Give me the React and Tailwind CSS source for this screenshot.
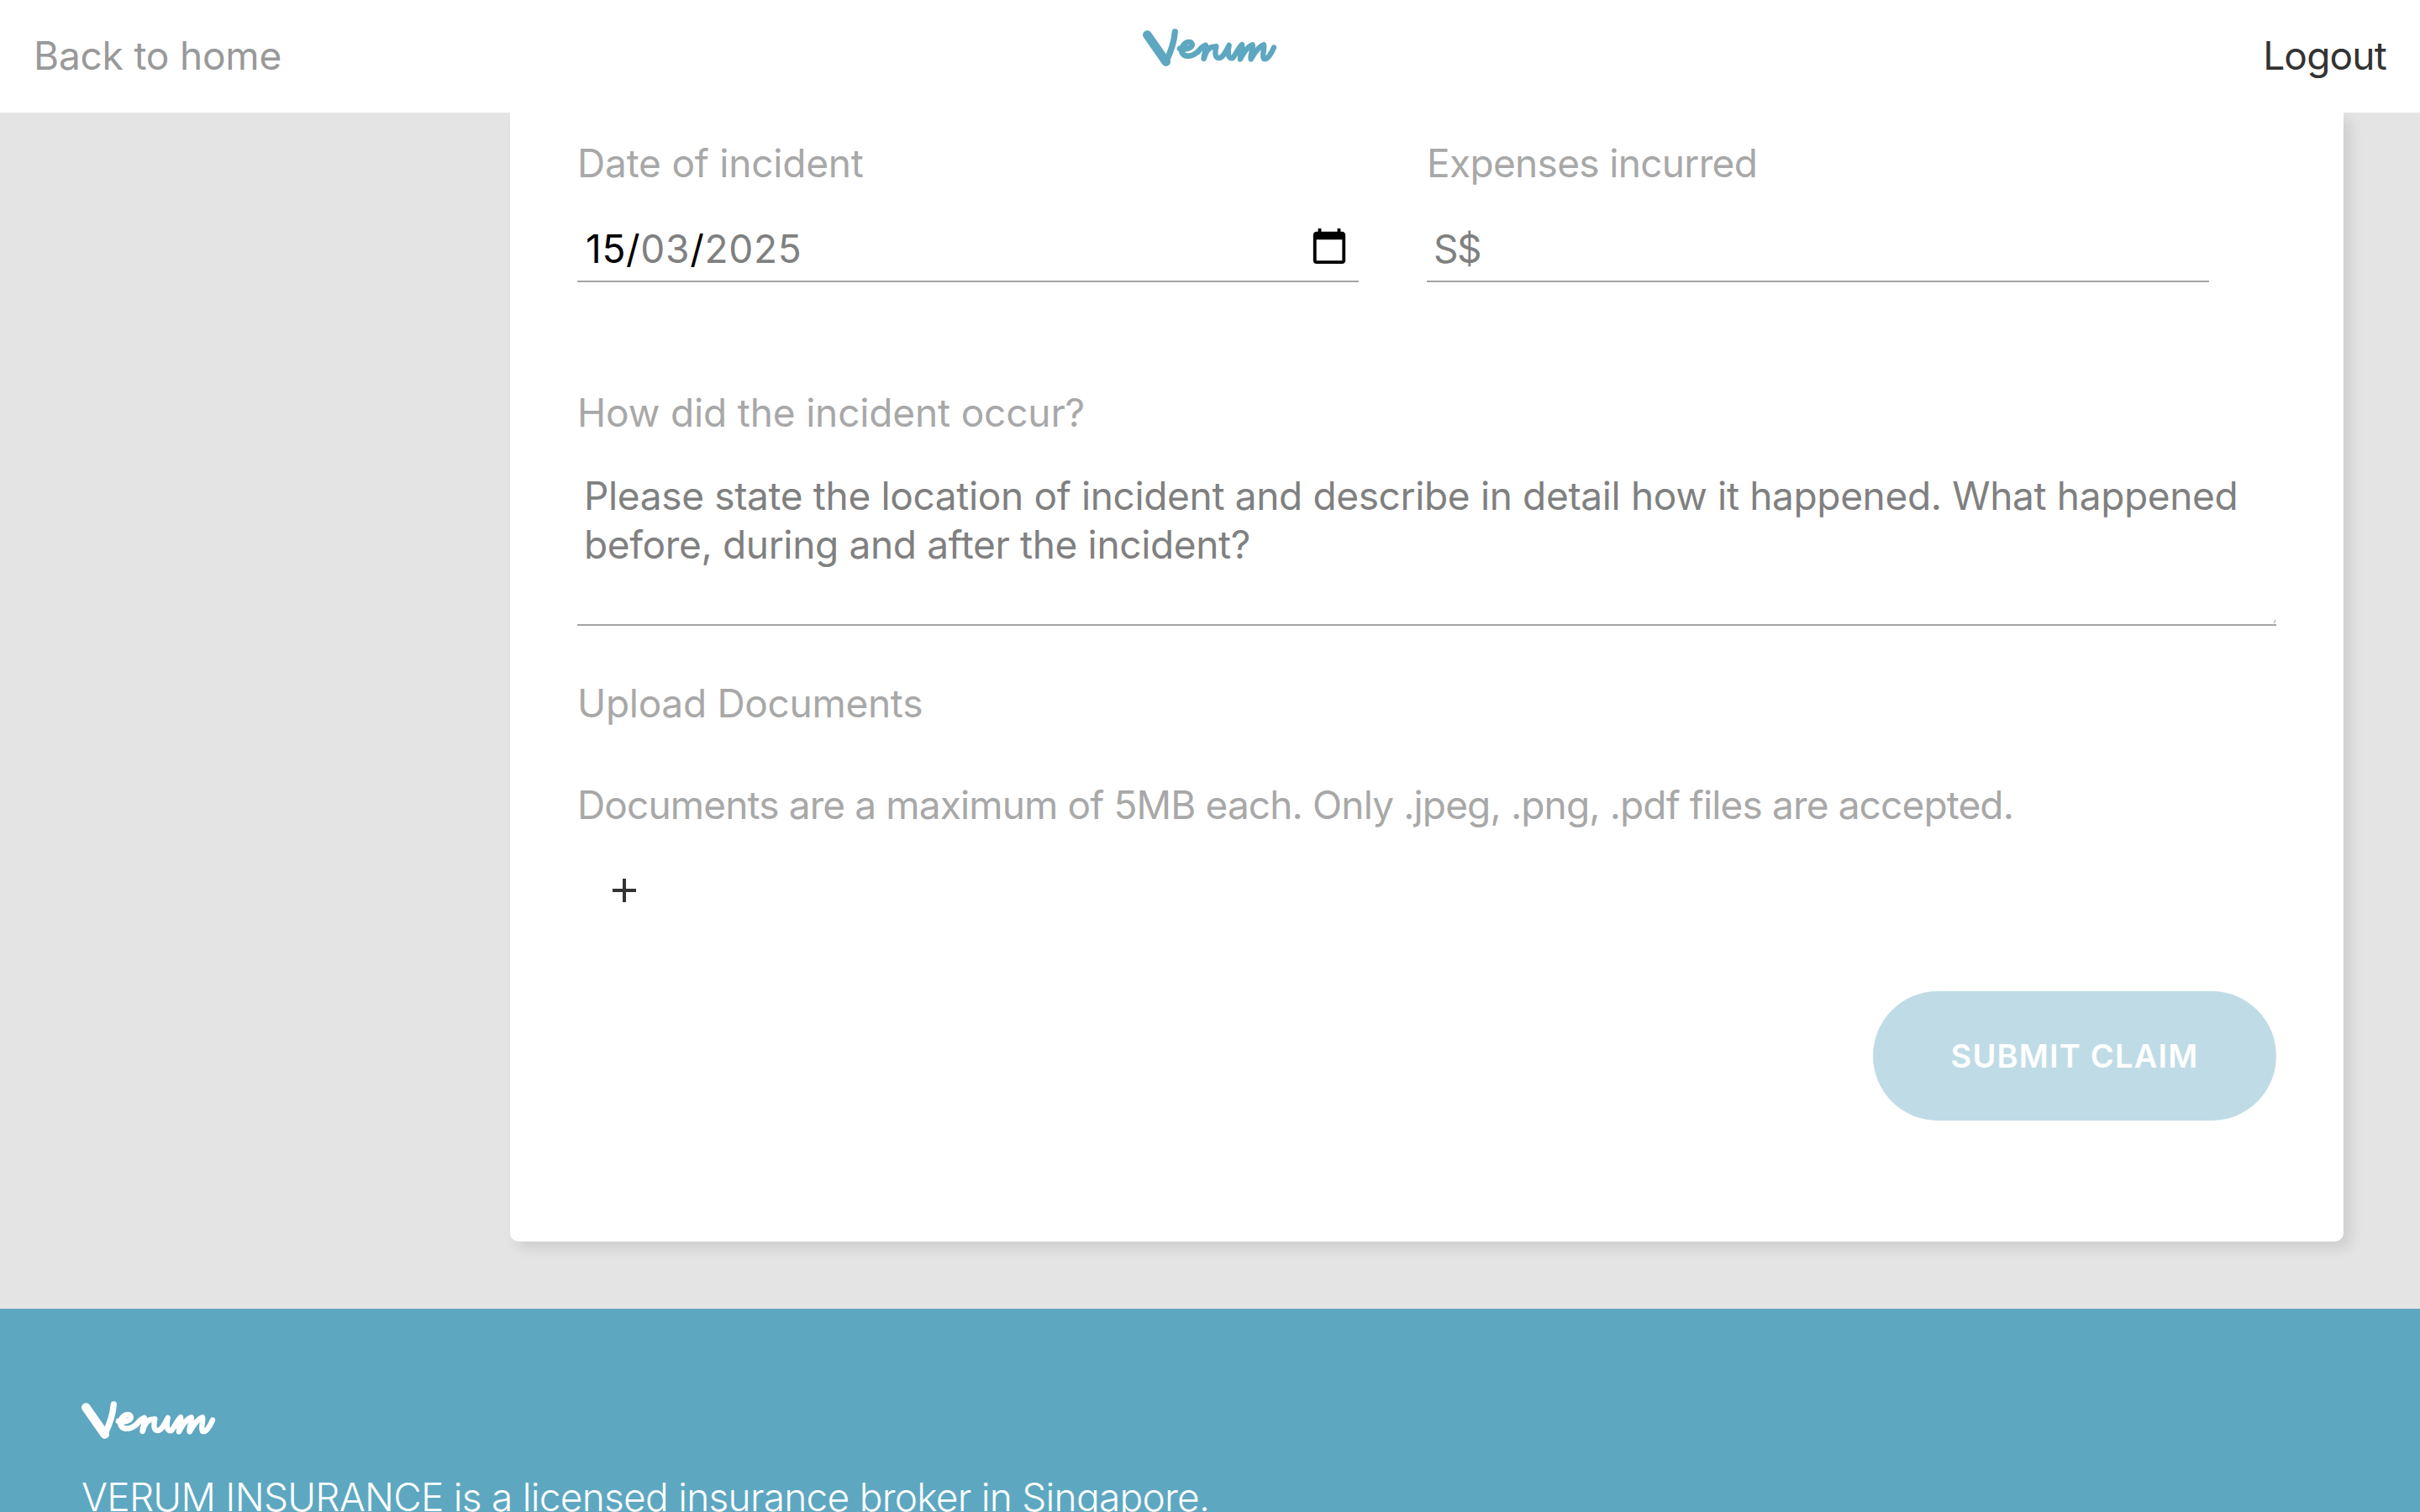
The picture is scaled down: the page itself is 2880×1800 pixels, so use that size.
import React from "react";

function Logo({ color }) {
  return (
    <svg width="160" height="47" viewBox="180 100 480 140" fill="none" stroke={color} strokeLinecap="round" strokeLinejoin="round" className="block">
      <path d="M196 125 L263 221" strokeWidth="32" />
      <path d="M263 221 C278 190 292 150 295 114" strokeWidth="22" />
      <path d="M312 174 C332 180 358 172 356 158 C350 144 328 150 320 172 C312 200 342 212 376 186" strokeWidth="20" />
      <path d="M376 186 C384 176 392 166 404 162 C410 174 398 192 398 210 C404 188 416 166 436 168" strokeWidth="20" />
      <path d="M442 166 C438 186 436 208 452 208 C468 206 478 182 488 162 C484 184 482 212 500 208 C510 200 520 172 534 160 C538 172 526 196 528 212 C540 190 552 168 572 160 C576 176 562 196 566 212 C578 192 592 168 612 160 C616 176 604 200 612 210 C624 216 640 190 648 170" strokeWidth="19" />
    </svg>
  );
}

function Label({ children, className = "" }) {
  return <div className={`h-[58px] leading-[56px] text-[46px] text-[#a8a8a8] ${className}`}>{children}</div>;
}

export default function App() {
  return (
    <div className="h-[1800px] overflow-hidden bg-[#e4e4e4] font-[Inter,sans-serif]">
      <header className="relative z-10 flex h-[134px] items-center bg-white px-[40px] text-[46px]">
        <div className="flex-1 pb-[2px] tracking-[-0.2px] text-[#999999]">Back to home</div>
        <div className="pb-[21px]"><Logo color="#5ea7c1" /></div>
        <div className="flex flex-1 justify-end pb-[2px] tracking-[-0.8px] text-[#333333]">Logout</div>
      </header>

      <main className="pl-[607px] pr-[91px] pb-[80px]">
        <section className="h-[1344px] rounded-b-[10px] bg-white px-[80px] pt-[32px] shadow-[8px_8px_16px_rgba(0,0,0,0.1)]">
          <div className="flex gap-[81px]">
            <div className="w-[930px]">
              <Label className="tracking-[-0.2px]">Date of incident</Label>
              <div className="relative mt-[39px] flex h-[73px] items-center justify-between border-b-2 border-[#a3a3a3] pb-[5px] pl-[10px] pr-[12px] text-[46px] tracking-[0.7px] text-[#808080]">
                <div><span className="text-black">15/</span>03<span className="text-black">/</span>2025</div>
                <svg width="46" height="46" viewBox="0 0 24 24" fill="#000000" className="shrink-0 -translate-y-[3px]">
                  <path d="M20 3h-1V1h-2v2H7V1H5v2H4c-1.1 0-2 .9-2 2v16c0 1.1.9 2 2 2h16c1.1 0 2-.9 2-2V5c0-1.1-.9-2-2-2zm0 18H4V8h16v13z" />
                </svg>
              </div>
            </div>
            <div className="w-[931px]">
              <Label className="tracking-[-0.67px]">Expenses incurred</Label>
              <div className="mt-[39px] flex h-[73px] items-center border-b-2 border-[#a3a3a3] pb-[5px] pl-[8px] text-[46px] tracking-[-1.4px] text-[#808080]">S$</div>
            </div>
          </div>

          <Label className="mt-[127px] tracking-[-0.15px]">How did the incident occur?</Label>
          <div className="relative mt-[41px] h-[183px] border-b-2 border-[#a3a3a3] pl-[8px] text-[46px] leading-[58px] tracking-[-0.35px] text-[#808080]">
            <p className="-translate-y-[1px]">Please state the location of incident and describe in detail how it happened. What happened<br />before, during and after the incident?</p>
            <svg width="6" height="6" viewBox="0 0 6 6" className="absolute bottom-0 right-0" stroke="#999999" strokeWidth="1"><path d="M5 1 L3 5" /></svg>
          </div>

          <Label className="mt-[64px] tracking-[-0.3px] text-[#999999]">Upload Documents</Label>
          <Label className="mt-[63px] tracking-[-0.87px]">Documents are a maximum of 5MB each. Only .jpeg, .png, .pdf files are accepted.</Label>
          <div className="mt-[58px] pl-[42px]">
            <svg width="28" height="28" viewBox="0 0 28 28" stroke="#333333" strokeWidth="4" className="block"><path d="M14 0V28M0 14H28" /></svg>
          </div>
          <div className="mt-[106px] flex justify-end">
            <button className="h-[154px] w-[480px] rounded-full bg-[#bfdce6] text-[38px] font-semibold tracking-[1.2px] text-white">SUBMIT CLAIM</button>
          </div>
        </section>
      </main>

      <footer className="bg-[#5ea7c1] px-[97px] pt-[109px] text-white">
        <Logo color="#ffffff" />
        <p className="mt-[39px] text-[46px] font-light leading-[58px] tracking-[-0.73px]">VERUM INSURANCE is a licensed insurance broker in Singapore.</p>
      </footer>
    </div>
  );
}
